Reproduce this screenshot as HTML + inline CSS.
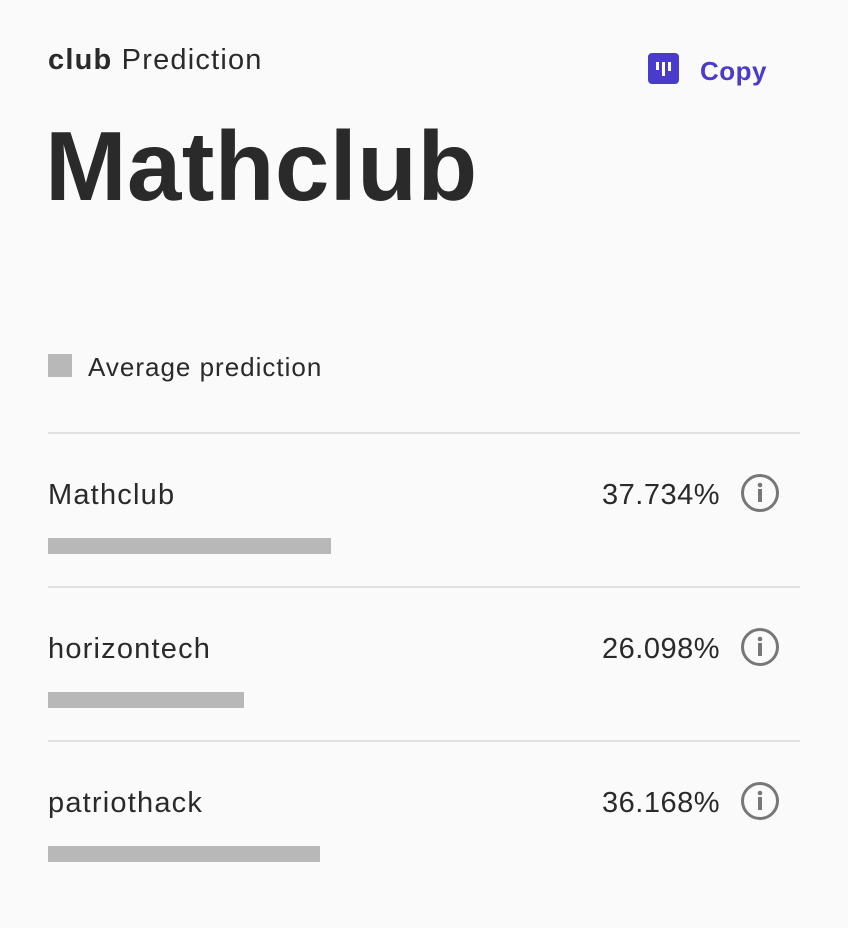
<!DOCTYPE html>
<html><head><meta charset="utf-8"><style>
*{margin:0;padding:0}
body{width:848px;height:928px;background:#fafafa;font-family:"Liberation Sans",sans-serif;color:#2a2a2a;position:relative;overflow:hidden}
.a{position:absolute;white-space:nowrap}
.line{position:absolute;left:48px;width:752px;height:2px;background:#e0e0e0}
.bar{position:absolute;left:48px;height:16px;background:#b8b8b8}
.name{font-size:29px;line-height:1;letter-spacing:1.2px}
.pct{font-size:29px;line-height:1;right:128px;letter-spacing:0.5px}
</style></head><body>
<div class="a" style="left:48px;top:46px;font-size:29px;line-height:1;letter-spacing:1.2px"><b>club</b> Prediction</div>
<div class="a" style="left:648px;top:53px;width:31px;height:31px;background:#4b3bcc;border-radius:4px">
<div style="position:absolute;left:8px;top:9px;width:3px;height:8px;background:#fff"></div>
<div style="position:absolute;left:14px;top:9px;width:3px;height:14px;background:#fff"></div>
<div style="position:absolute;left:20px;top:9px;width:3px;height:9px;background:#fff"></div>
</div>
<div class="a" style="left:700px;top:58px;font-size:26px;font-weight:bold;color:#4b3bcc;line-height:1;letter-spacing:0.5px">Copy</div>
<div class="a" style="left:45px;top:113px;font-size:98px;font-weight:bold;line-height:1.1;letter-spacing:0.3px">Mathclub</div>
<div class="a" style="left:48px;top:354px;width:24px;height:23px;background:#b8b8b8"></div>
<div class="a" style="left:88px;top:354px;font-size:26px;line-height:1;letter-spacing:1px">Average prediction</div>
<div class="line" style="top:432px"></div>
<div class="line" style="top:586px"></div>
<div class="line" style="top:740px"></div>

<div class="a name" style="left:48px;top:481px">Mathclub</div>
<div class="a pct" style="top:481px">37.734%</div>
<div class="bar" style="top:538px;width:283px"></div>

<div class="a name" style="left:48px;top:635px">horizontech</div>
<div class="a pct" style="top:635px">26.098%</div>
<div class="bar" style="top:692px;width:196px"></div>

<div class="a name" style="left:48px;top:789px">patriothack</div>
<div class="a pct" style="top:789px">36.168%</div>
<div class="bar" style="top:846px;width:272px"></div>

<svg class="a" style="left:740px;top:473px" width="40" height="40" viewBox="0 0 40 40"><circle cx="20" cy="20" r="17.5" fill="none" stroke="#777" stroke-width="3"/><circle cx="20" cy="12" r="2.3" fill="#777"/><rect x="18" y="16" width="4" height="13" fill="#777"/></svg>
<svg class="a" style="left:740px;top:627px" width="40" height="40" viewBox="0 0 40 40"><circle cx="20" cy="20" r="17.5" fill="none" stroke="#777" stroke-width="3"/><circle cx="20" cy="12" r="2.3" fill="#777"/><rect x="18" y="16" width="4" height="13" fill="#777"/></svg>
<svg class="a" style="left:740px;top:781px" width="40" height="40" viewBox="0 0 40 40"><circle cx="20" cy="20" r="17.5" fill="none" stroke="#777" stroke-width="3"/><circle cx="20" cy="12" r="2.3" fill="#777"/><rect x="18" y="16" width="4" height="13" fill="#777"/></svg>
</body></html>
